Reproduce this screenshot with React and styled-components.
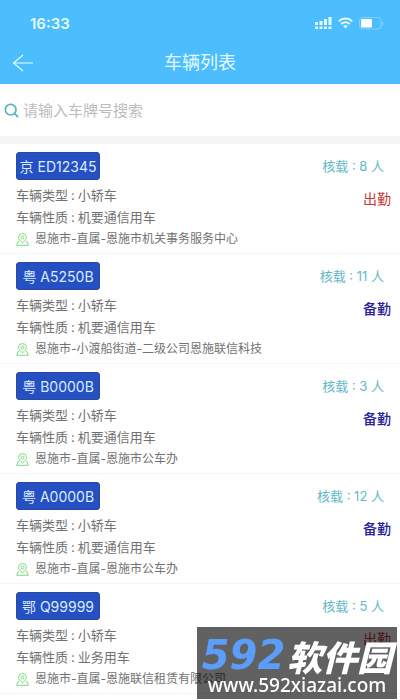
import React from "react";
import styled, { createGlobalStyle } from "styled-components";

const GlobalStyle = createGlobalStyle`
  * {
    box-sizing: border-box;
  }

  body {
    margin: 0;
    background: #fefefe;
    color: #727272;
    font-family: Inter, "Noto Sans CJK SC", sans-serif;
  }
`;

const Header = styled.header`
  padding: 12px 16px 0 12px;
  background: #4cbdfd;
  color: #e6fbff;
`;

const StatusBar = styled.div`
  display: flex;
  align-items: center;
  justify-content: space-between;
  height: 22px;
  padding-left: 18px;
`;

const Clock = styled.time`
  font-size: 15px;
  font-weight: 600;
`;

const StatusIcons = styled.div`
  display: flex;
  align-items: center;
  gap: 6px;
`;

const NavBar = styled.div`
  display: grid;
  grid-template-columns: 24px 1fr 20px;
  align-items: center;
  height: 42px;
  margin-top: 8px;
`;

const BackButton = styled.button`
  display: flex;
  padding: 0;
  border: 0;
  background: none;
  color: inherit;
`;

const Title = styled.h1`
  margin: 0;
  font-size: 18px;
  font-weight: 400;
  line-height: 24px;
  text-align: center;
`;

const SearchBar = styled.label`
  display: flex;
  align-items: center;
  gap: 4px;
  height: 52px;
  padding: 0 4px;
  color: #5fb0c4;
`;

const SearchInput = styled.input`
  flex: 1;
  min-width: 0;
  padding: 0;
  border: 0;
  outline: 0;
  background: none;
  color: #727272;
  font: inherit;
  font-size: 15px;

  &::placeholder {
    color: #bcbcbc;
    opacity: 1;
  }
`;

const List = styled.ul`
  margin: 0;
  padding: 0;
  border-top: 8px solid #f5f5f5;
  list-style: none;
`;

const Row = styled.li`
  display: flex;
  justify-content: space-between;
  padding: 8px 9px 3px 16px;
  border-bottom: 1px solid #f4f4f4;
`;

const Details = styled.div`
  min-width: 0;
`;

const Plate = styled.div`
  display: flex;
  align-items: center;
  justify-content: center;
  width: 84px;
  height: 28px;
  margin-bottom: 4px;
  border: 1px solid #2a4a9c;
  border-radius: 3px;
  background: #2450c4;
  color: #dcebff;
  font-size: 14px;
  white-space: nowrap;
`;

const Field = styled.div`
  display: flex;
  gap: 3px;
  font-size: 13px;
  line-height: 22px;
  white-space: nowrap;
`;

const Address = styled.div`
  display: flex;
  align-items: center;
  gap: 6px;
  font-size: 12px;
  line-height: 22px;
  white-space: nowrap;
`;

const Side = styled.div`
  display: flex;
  flex-direction: column;
  align-items: flex-end;
`;

const Capacity = styled.div`
  padding-right: 7px;
  color: #62b9c8;
  font-size: 13px;
  line-height: 28px;
  white-space: nowrap;
`;

const Status = styled.div`
  margin-top: 8px;
  color: ${props => (props.$out ? "#c93a32" : "#29209a")};
  font-size: 14px;
  font-weight: ${props => (props.$out ? 400 : 500)};
  line-height: 22px;
`;

const Watermark = styled.aside`
  position: fixed;
  right: 3px;
  bottom: 1px;
  display: flex;
  flex-direction: column;
  align-items: center;
  width: 200px;
  padding: 10px 0 2px;
  background: rgba(0, 0, 0, 0.62);
  color: #fff;
  white-space: nowrap;
`;

const Brand = styled.div`
  display: flex;
  align-items: center;
  gap: 2px;
  height: 36px;
  font-family: "Noto Sans CJK SC", sans-serif;
  font-size: 35px;
  font-style: italic;
  font-weight: 900;
`;

const BrandNumber = styled.span`
  color: #5b9dfb;
  font-family: "DejaVu Sans", sans-serif;
  font-size: 40px;
  font-weight: 700;
`;

const Site = styled.div`
  font-family: "Noto Sans", sans-serif;
  font-size: 19px;
  font-weight: 500;
  line-height: 24px;
`;

const SignalIcon = () => (
  <svg width="17" height="13" viewBox="0 0 17 13" fill="currentColor">
    <path d="M0 5h3v3H0zM4.5 4h3v4h-3zM9 2h3v6H9zM13.5 0h3v8h-3zM0 9.5h3V12H0zM4.5 9.5h3V12h-3zM9 9.5h3V12H9zM13.5 9.5h3V12h-3z" />
  </svg>
);

const WifiIcon = () => (
  <svg width="15" height="12" viewBox="0 0 15 12" fill="none" stroke="currentColor" strokeWidth="2">
    <path d="M.8 4.2a9.6 9.6 0 0 1 13.4 0M3.3 7a6 6 0 0 1 8.4 0" />
    <path d="M7.5 11.5 5.2 9.2a3.3 3.3 0 0 1 4.6 0z" fill="currentColor" stroke="none" />
  </svg>
);

const BatteryIcon = () => (
  <svg width="25" height="13" viewBox="0 0 25 13" fill="none">
    <rect x=".5" y=".5" width="21.5" height="11.5" rx="3" stroke="#7fd0fc" />
    <rect x="2" y="2" width="11" height="8.5" rx="1" fill="#fff" />
    <path d="M23.5 4.5v4" stroke="#7fd0fc" strokeWidth="1.5" />
  </svg>
);

const BackIcon = () => (
  <svg width="22" height="18" viewBox="0 0 22 18" fill="none" stroke="currentColor" strokeWidth="1.2">
    <path d="M21 9H1.5M11 1 1.5 9l9.5 8" />
  </svg>
);

const SearchIcon = () => (
  <svg width="15" height="15" viewBox="0 0 15 15" fill="none" stroke="currentColor" strokeWidth="1.7" strokeLinecap="round">
    <circle cx="6.7" cy="6.7" r="5.3" />
    <path d="m10.7 10.7 3 3" />
  </svg>
);

const PinIcon = () => (
  <svg width="13" height="13" viewBox="0 0 13 13" fill="none" stroke="#7fdc84" strokeLinejoin="round">
    <path d="M6.5 10C4 7.7 2.5 6.2 2.5 4.5a4 4 0 0 1 8 0C10.5 6.2 9 7.7 6.5 10z" />
    <circle cx="6.5" cy="4.5" r="1.5" />
    <path d="M3 8.500H2L.7 12.300h11.600L11 8.500h-1" />
  </svg>
);

const vehicles = [
  { plate: "京 ED12345", type: "小轿车", use: "机要通信用车", address: "恩施市-直属-恩施市机关事务服务中心", seats: 8, out: true },
  { plate: "粤 A5250B", type: "小轿车", use: "机要通信用车", address: "恩施市-小渡船街道-二级公司恩施联信科技", seats: 11 },
  { plate: "粤 B0000B", type: "小轿车", use: "机要通信用车", address: "恩施市-直属-恩施市公车办", seats: 3 },
  { plate: "粤 A0000B", type: "小轿车", use: "机要通信用车", address: "恩施市-直属-恩施市公车办", seats: 12 },
  { plate: "鄂 Q99999", type: "小轿车", use: "业务用车", address: "恩施市-直属-恩施联信租赁有限公司", seats: 5, out: true },
];

const Vehicle = ({ plate, type, use, address, seats, out }) => (
  <Row>
    <Details>
      <Plate>{plate}</Plate>
      <Field>
        <span>车辆类型</span>
        <span>:</span>
        <span>{type}</span>
      </Field>
      <Field>
        <span>车辆性质</span>
        <span>:</span>
        <span>{use}</span>
      </Field>
      <Address>
        <PinIcon />
        {address}
      </Address>
    </Details>
    <Side>
      <Capacity>核载 : {seats} 人</Capacity>
      <Status $out={out}>{out ? "出勤" : "备勤"}</Status>
    </Side>
  </Row>
);

const App = () => (
  <>
    <GlobalStyle />
    <Header>
      <StatusBar>
        <Clock>16:33</Clock>
        <StatusIcons>
          <SignalIcon />
          <WifiIcon />
          <BatteryIcon />
        </StatusIcons>
      </StatusBar>
      <NavBar>
        <BackButton aria-label="返回">
          <BackIcon />
        </BackButton>
        <Title>车辆列表</Title>
      </NavBar>
    </Header>
    <main>
      <SearchBar>
        <SearchIcon />
        <SearchInput type="text" placeholder="请输入车牌号搜索" aria-label="请输入车牌号搜索" />
      </SearchBar>
      <List>
        {vehicles.map(vehicle => (
          <Vehicle key={vehicle.plate} {...vehicle} />
        ))}
      </List>
    </main>
    <Watermark>
      <Brand>
        <BrandNumber>592</BrandNumber>
        <span>软件园</span>
      </Brand>
      <Site>www.592xiazai.com</Site>
    </Watermark>
  </>
);

export default App;
